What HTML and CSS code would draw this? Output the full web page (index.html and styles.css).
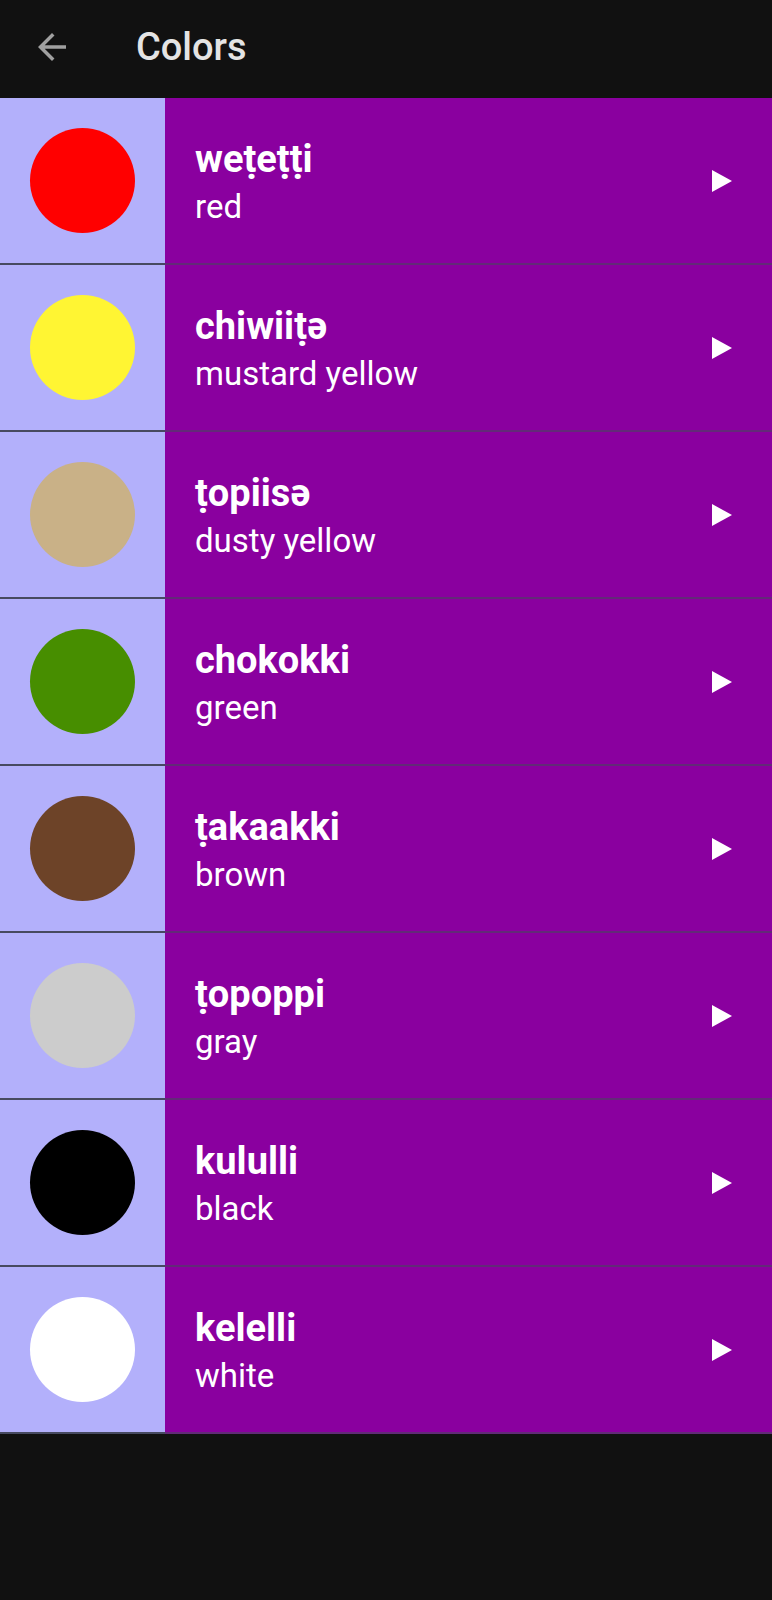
FILE: index.html
```html
<!DOCTYPE html>
<html>
<head>
<meta charset="utf-8">
<link rel="stylesheet" href="styles.css">
</head>
<body>
<div class="app">
  <header class="bar">
    <svg class="back" width="42" height="42" viewBox="0 0 24 24"><path d="M20 11H7.83l5.59-5.59L12 4l-8 8 8 8 1.41-1.41L7.83 13H20v-2z" fill="#a0a0a0"/></svg>
    <div class="title">Colors</div>
  </header>
  <ul class="list">
    <li class="row"><div class="swatch"><span class="dot" style="background:#ff0000"></span></div><div class="info"><div class="text"><div class="name">weṭeṭṭi</div><div class="sub">red</div></div><span class="play"></span></div></li>
    <li class="row"><div class="swatch"><span class="dot" style="background:#fff533"></span></div><div class="info"><div class="text"><div class="name">chiwiiṭə</div><div class="sub">mustard yellow</div></div><span class="play"></span></div></li>
    <li class="row"><div class="swatch"><span class="dot" style="background:#c9b187"></span></div><div class="info"><div class="text"><div class="name">ṭopiisə</div><div class="sub">dusty yellow</div></div><span class="play"></span></div></li>
    <li class="row"><div class="swatch"><span class="dot" style="background:#478e00"></span></div><div class="info"><div class="text"><div class="name">chokokki</div><div class="sub">green</div></div><span class="play"></span></div></li>
    <li class="row"><div class="swatch"><span class="dot" style="background:#6d4328"></span></div><div class="info"><div class="text"><div class="name">ṭakaakki</div><div class="sub">brown</div></div><span class="play"></span></div></li>
    <li class="row"><div class="swatch"><span class="dot" style="background:#cccccc"></span></div><div class="info"><div class="text"><div class="name">ṭopoppi</div><div class="sub">gray</div></div><span class="play"></span></div></li>
    <li class="row"><div class="swatch"><span class="dot" style="background:#000000"></span></div><div class="info"><div class="text"><div class="name">kululli</div><div class="sub">black</div></div><span class="play"></span></div></li>
    <li class="row"><div class="swatch"><span class="dot" style="background:#ffffff"></span></div><div class="info"><div class="text"><div class="name">kelelli</div><div class="sub">white</div></div><span class="play"></span></div></li>
  </ul>
</div>
</body>
</html>
```
FILE: styles.css
```css
html, body {
  margin: 0;
  padding: 0;
  background: #111111;
}
body {
  font-family: Roboto, "Liberation Sans", sans-serif;
  width: 772px;
  height: 1600px;
  overflow: hidden;
}
.bar {
  height: 98px;
  display: flex;
  align-items: center;
  background: #111111;
}
.back {
  margin-left: 31px;
  margin-bottom: 4px;
  flex: none;
}
.title {
  margin-left: 63px;
  color: #e4e4e4;
  font-size: 38px;
  font-weight: 500;
  padding-bottom: 4px;
}
.list {
  list-style: none;
  margin: 0;
  padding: 0;
}
.row {
  display: flex;
  height: 167px;
}
.swatch {
  width: 165px;
  flex: none;
  background: #b3b0fb;
  border-bottom: 2px solid #474a60;
  display: flex;
  align-items: center;
  justify-content: center;
}
.dot {
  width: 105px;
  height: 105px;
  border-radius: 50%;
  display: block;
}
.info {
  flex: 1;
  background: #8a009f;
  border-bottom: 2px solid #632a78;
  display: flex;
  align-items: center;
  padding-left: 30px;
  padding-right: 40px;
}
.text {
  flex: 1;
  color: #ffffff;
  padding-top: 6px;
}
.name {
  font-weight: 700;
  font-size: 38px;
  line-height: 46px;
}
.sub {
  font-weight: 400;
  font-size: 33px;
  line-height: 49px;
}
.play {
  width: 0;
  height: 0;
  border-top: 11.5px solid transparent;
  border-bottom: 11.5px solid transparent;
  border-left: 20px solid #ffffff;
}
```
